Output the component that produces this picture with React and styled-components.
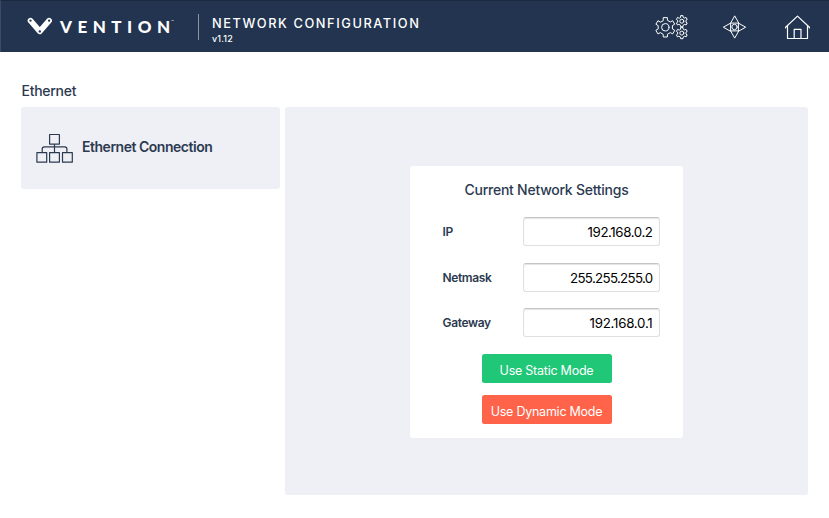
import React from 'react';
import styled, { createGlobalStyle } from 'styled-components';

const GlobalStyle = createGlobalStyle`
  *, *::before, *::after { box-sizing: border-box; }
  body { margin: 0; background: #fff; color: #2c3a50; font-family: Inter, "Liberation Sans", sans-serif; }
  h1, h2, h3, p { margin: 0; font-weight: 500; }
`;

const Page = styled.div`
  height: 518px;
  overflow: hidden;
`;

const Header = styled.header`
  display: flex;
  height: 52px;
  padding-left: 26px;
  color: #fff;
  background: #22344f;
  border-top: 1px solid #1b2a41;
  border-left: 1px solid #3b4b63;
`;

const Brand = styled.div`
  display: flex;
  align-items: flex-start;
  width: 171px;
  padding-top: 16px;
`;

const BrandName = styled.span`
  margin: 1px 0 0 7px;
  font: 900 17px/18px Lato, sans-serif;
  letter-spacing: 5.5px;
  white-space: nowrap;
`;

const LastLetter = styled.span`
  letter-spacing: 0;
`;

const Trademark = styled.span`
  margin: 2px 0 0 1px;
  font: 400 4px/5px Inter, sans-serif;
`;

const Divider = styled.div`
  width: 1px;
  height: 26px;
  margin-top: 13px;
  background: #8994a4;
`;

const TitleBlock = styled.div`
  width: 455px;
  padding: 14px 0 0 13px;
`;

const Title = styled.h1`
  font-size: 12.8px;
  line-height: 17px;
  letter-spacing: 1.58px;
`;

const Version = styled.p`
  margin-top: 1px;
  font-size: 9px;
  line-height: 12px;
  letter-spacing: 0.15px;
`;

const Actions = styled.nav`
  display: flex;
  gap: 35px;
  padding-top: 13px;
`;

const LineIcon = styled.svg`
  display: block;
  flex: none;
  fill: none;
  stroke: currentColor;
  stroke-width: ${(p) => p.$weight || 1};
  stroke-linejoin: round;
  stroke-linecap: round;
`;

const Main = styled.main`
  padding: 30px 21px 0;
`;

const SectionTitle = styled.h2`
  height: 25px;
  padding-left: 0.5px;
  font-size: 14px;
  line-height: 18px;
  letter-spacing: -0.28px;
`;

const Columns = styled.div`
  display: grid;
  grid-template-columns: 259px 523px;
  gap: 5px;
  align-items: start;
`;

const ConnectionCard = styled.section`
  display: flex;
  height: 82px;
  padding: 26px 0 0 15px;
  background: #eff0f6;
  border-radius: 3px;
`;

const ConnectionName = styled.h3`
  margin: 4px 0 0 8px;
  font-size: 14px;
  font-weight: 600;
  line-height: 20px;
  letter-spacing: -0.48px;
`;

const Panel = styled.section`
  display: flex;
  justify-content: center;
  height: 388px;
  padding-top: 59px;
  background: #eff0f6;
  border-radius: 3px;
`;

const SettingsCard = styled.form`
  display: flex;
  flex-direction: column;
  align-items: center;
  width: 273px;
  height: 272px;
  padding-top: 14px;
  background: #fff;
  border-radius: 3px;
`;

const SettingsTitle = styled.h3`
  margin-bottom: 17px;
  font-size: 14px;
  line-height: 20px;
  letter-spacing: -0.25px;
`;

const Field = styled.label`
  display: grid;
  grid-template-columns: 80px 137px;
  align-items: center;
  height: 29px;
  margin: 0 0 16.5px 9px;
  font-size: 12px;
  font-weight: 600;
  letter-spacing: -0.36px;
`;

const Input = styled.input`
  width: 137px;
  height: 29px;
  padding: 1px 6px 0;
  color: #000;
  background: #fff;
  font: 400 13.3px Inter, sans-serif;
  letter-spacing: ${(p) => p.$tracking}px;
  text-align: right;
  border: 1px solid #e0e0e2;
  border-top-color: #c4c5c7;
  border-radius: 3px;
  box-shadow: inset 0 1px 1px #e5e5e5;
  outline: none;
`;

const ModeButton = styled.button`
  width: 130px;
  height: 29px;
  margin-bottom: 12px;
  padding: 5px 0 0;
  color: #fff;
  background: ${(p) => p.$color};
  border: 0;
  border-radius: 2.5px;
  font: 400 12.5px/18px Inter, sans-serif;
  letter-spacing: -0.24px;
`;

const gearPath = (cx, cy, outer, inner, teeth) => {
  const step = (Math.PI * 2) / teeth;
  const points = [];
  for (let i = 0; i < teeth; i += 1) {
    const a = i * step - Math.PI / 2;
    [[-0.28, inner], [-0.2, outer], [0.2, outer], [0.28, inner]].forEach(([t, r]) => {
      points.push(`${(cx + Math.cos(a + t * step) * r).toFixed(2)} ${(cy + Math.sin(a + t * step) * r).toFixed(2)}`);
    });
  }
  return `M${points.join('L')}Z`;
};

const VentionMark = () => (
  <svg width="26" height="19" viewBox="0 0 26 19">
    <path d="M3.5 3.7 12.8 14.3 22.1 3.7" fill="none" stroke="#fff" strokeWidth="5.6" strokeLinecap="round" strokeLinejoin="round" />
    <g fill="#22344f">
      <circle cx="3.5" cy="3.7" r="1.15" />
      <circle cx="22.1" cy="3.7" r="1.15" />
      <circle cx="12.8" cy="14.4" r="1.2" />
    </g>
  </svg>
);

const GearsIcon = () => (
  <LineIcon width="34" height="26" viewBox="0 0 34 26">
    <path d={gearPath(11.3, 13.3, 9.9, 7.3, 6)} />
    <circle cx="11.3" cy="13.3" r="3.7" />
    <path d={gearPath(27.8, 7.2, 5.7, 4.3, 6)} />
    <circle cx="27.8" cy="7.2" r="2" />
    <path d={gearPath(27.8, 19.1, 5.7, 4.3, 6)} />
    <circle cx="27.8" cy="19.1" r="2" />
  </LineIcon>
);

const JogIcon = () => (
  <LineIcon width="26" height="26" viewBox="0 0 26 26">
    <circle cx="11.5" cy="13" r="2.7" />
    <path d="M11.5 2.2 7.6 9.1H15.4ZM11.5 23.8 7.6 16.9H15.4ZM.7 13 7.6 9.1V16.9ZM22.3 13 15.4 9.1V16.9Z" />
  </LineIcon>
);

const HomeIcon = () => (
  <LineIcon width="28" height="27" viewBox="0 0 28 27" $weight={1.2}>
    <path d="M1.6 13.2 13.5 2.1 25.4 13.2V14M1.6 13.2V14M3.5 12V24.5H23.5V12M10.2 24.5V15.3H17V24.5" />
  </LineIcon>
);

const NetworkIcon = () => (
  <LineIcon width="38" height="31" viewBox="0 0 38 31" $weight={1.2}>
    <path d="M13.6 1.5H23.4V11.1H13.6ZM.9 19.6H10.7V29.2H.9ZM13.6 19.6H23.4V29.2H13.6ZM26.5 19.6H36.3V29.2H26.5ZM18.5 11.1V19.6M6.2 19.6V16Q6.2 13.8 8.4 13.8H28.7Q30.9 13.8 30.9 16V19.6" />
  </LineIcon>
);

const fields = [
  { label: 'IP', value: '192.168.0.2', tracking: -0.42 },
  { label: 'Netmask', value: '255.255.255.0', tracking: -0.68 },
  { label: 'Gateway', value: '192.168.0.1', tracking: -0.25 },
];

export default function App() {
  return (
    <Page>
      <GlobalStyle />
      <Header>
        <Brand>
          <VentionMark />
          <BrandName>VENTIO<LastLetter>N</LastLetter></BrandName>
          <Trademark>™</Trademark>
        </Brand>
        <Divider />
        <TitleBlock>
          <Title>NETWORK CONFIGURATION</Title>
          <Version>v1.12</Version>
        </TitleBlock>
        <Actions>
          <GearsIcon />
          <JogIcon />
          <HomeIcon />
        </Actions>
      </Header>
      <Main>
        <SectionTitle>Ethernet</SectionTitle>
        <Columns>
          <ConnectionCard>
            <NetworkIcon />
            <ConnectionName>Ethernet Connection</ConnectionName>
          </ConnectionCard>
          <Panel>
            <SettingsCard>
              <SettingsTitle>Current Network Settings</SettingsTitle>
              {fields.map((f) => (
                <Field key={f.label}>
                  {f.label}
                  <Input defaultValue={f.value} $tracking={f.tracking} />
                </Field>
              ))}
              <ModeButton type="button" $color="#20c777">Use Static Mode</ModeButton>
              <ModeButton type="button" $color="#ff6349">Use Dynamic Mode</ModeButton>
            </SettingsCard>
          </Panel>
        </Columns>
      </Main>
    </Page>
  );
}
